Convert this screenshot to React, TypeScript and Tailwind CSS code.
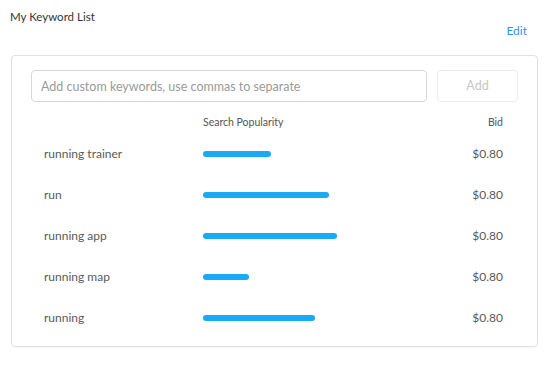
import { useState } from 'react'

type Keyword = {
  term: string
  popularity: number // bar width in px
  bid: string
}

const keywords: Keyword[] = [
  { term: 'running trainer', popularity: 68, bid: '$0.80' },
  { term: 'run', popularity: 126, bid: '$0.80' },
  { term: 'running app', popularity: 134, bid: '$0.80' },
  { term: 'running map', popularity: 46, bid: '$0.80' },
  { term: 'running', popularity: 112, bid: '$0.80' },
]

export default function App() {
  const [value, setValue] = useState('')

  return (
    <div className="w-[557px] h-[381px] bg-white font-['Lato',sans-serif] overflow-hidden">
      {/* Title */}
      <div className="pl-[10px] pt-[11px] text-[11.5px] leading-[12px] text-[#333]">My Keyword List</div>

      <div className="flex justify-end pr-[30px]">
        <button className="text-[12px] leading-[16px] text-[#3e8df5]">Edit</button>
      </div>

      {/* Card */}
      <div className="ml-[11px] mt-[16px] w-[527px] border border-[#e2e2e2] rounded-[4px] shadow-[0_1px_1px_rgba(0,0,0,0.04)]">
        <div className="flex gap-[10px] px-[19px] pt-[14px]">
          <input
            value={value}
            onChange={e => setValue(e.target.value)}
            placeholder="Add custom keywords, use commas to separate"
            className="w-[396px] h-[32px] border border-[#d6d6d6] rounded-[4px] px-[9px] text-[12.5px] text-[#333] placeholder:text-[#9a9a9a] outline-none"
          />
          <button className="w-[81px] h-[32px] border border-[#ececec] rounded-[4px] text-[12.5px] text-[#c6c6c6]">
            Add
          </button>
        </div>

        <div className="pl-[32px] pr-[34px] pb-[8px]">
          {/* Header */}
          <div className="grid grid-cols-[159px_1fr_auto] items-center h-[20px] mt-[11px] text-[10.5px] text-[#555]">
            <span />
            <span>Search Popularity</span>
            <span>Bid</span>
          </div>

          {keywords.map(k => (
            <div key={k.term} className="grid grid-cols-[159px_1fr_auto] items-center h-[41px] text-[12px] text-[#5a5a5a]">
              <span>{k.term}</span>
              <div className="h-[6px] rounded-full bg-[#19a9f5]" style={{ width: k.popularity }} />
              <span>{k.bid}</span>
            </div>
          ))}
        </div>
      </div>
    </div>
  )
}
